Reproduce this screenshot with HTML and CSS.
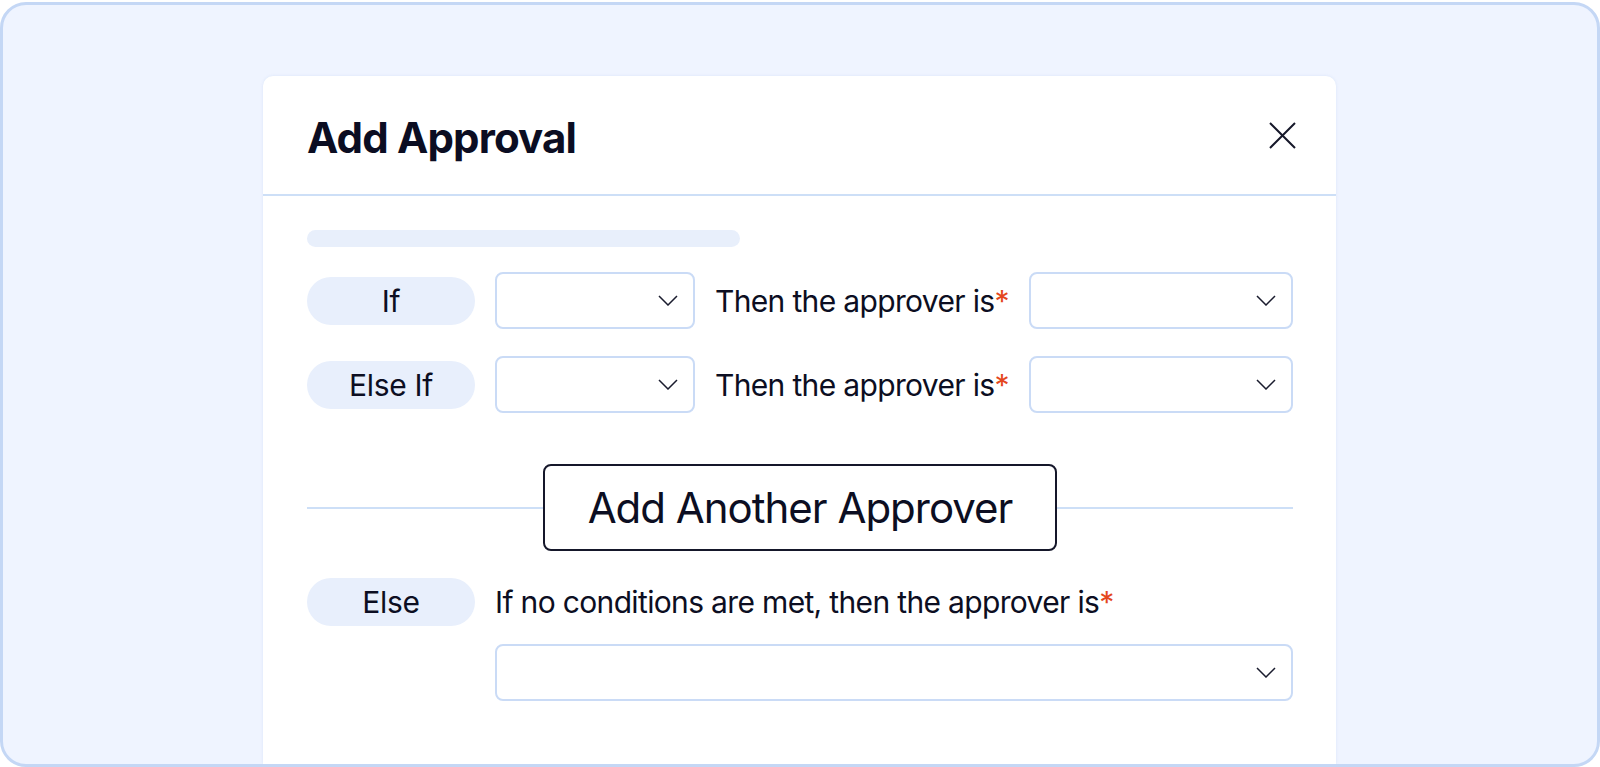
FILE: index.html
```html
<!DOCTYPE html>
<html lang="en">
<head>
<meta charset="utf-8">
<title>Add Approval</title>
<link rel="stylesheet" href="styles.css">
</head>
<body>
<div class="frame">
  <div class="modal">
    <div class="modal-header">
      <h1 class="title">Add Approval</h1>
      <button class="close" aria-label="Close">
        <svg width="27" height="27" viewBox="0 0 27 27"><path d="M1 1 L26 26 M26 1 L1 26" stroke="#16182a" stroke-width="2" fill="none"/></svg>
      </button>
    </div>
    <div class="modal-body">
      <div class="skeleton"></div>
      <div class="rule-row">
        <span class="pill">If</span>
        <div class="select small"><svg class="chev" width="20" height="11" viewBox="0 0 20 11"><polyline points="1,1 10,10 19,1" stroke="#1a1c2e" stroke-width="1.5" fill="none"/></svg></div>
        <span class="label">Then the approver is<span class="req">*</span></span>
        <div class="select grow"><svg class="chev" width="20" height="11" viewBox="0 0 20 11"><polyline points="1,1 10,10 19,1" stroke="#1a1c2e" stroke-width="1.5" fill="none"/></svg></div>
      </div>
      <div class="rule-row">
        <span class="pill">Else If</span>
        <div class="select small"><svg class="chev" width="20" height="11" viewBox="0 0 20 11"><polyline points="1,1 10,10 19,1" stroke="#1a1c2e" stroke-width="1.5" fill="none"/></svg></div>
        <span class="label">Then the approver is<span class="req">*</span></span>
        <div class="select grow"><svg class="chev" width="20" height="11" viewBox="0 0 20 11"><polyline points="1,1 10,10 19,1" stroke="#1a1c2e" stroke-width="1.5" fill="none"/></svg></div>
      </div>
      <div class="divider">
        <span class="divider-line"></span>
        <button class="add-btn">Add Another Approver</button>
        <span class="divider-line"></span>
      </div>
      <div class="else-row">
        <span class="pill">Else</span>
        <div class="else-col">
          <span class="label else-label">If no conditions are met, then the approver is<span class="req">*</span></span>
          <div class="select"><svg class="chev" width="20" height="11" viewBox="0 0 20 11"><polyline points="1,1 10,10 19,1" stroke="#1a1c2e" stroke-width="1.5" fill="none"/></svg></div>
        </div>
      </div>
    </div>
  </div>
</div>
</body>
</html>
```

FILE: styles.css
```css
* { box-sizing: border-box; }

html, body {
  margin: 0;
  padding: 0;
  background: #ffffff;
  font-family: Inter, "Noto Sans", "Liberation Sans", sans-serif;
  color: #0c0e22;
}

.frame {
  margin-top: 2px;
  height: 765px;
  border: 3px solid #c4d7f5;
  border-radius: 26px;
  background: #eff4ff;
  padding: 71px 0 0 260px;
  overflow: hidden;
  display: flex;
  flex-direction: column;
}

.modal {
  width: 1073px;
  flex: 1;
  background: #ffffff;
  border-radius: 10px 10px 0 0;
  box-shadow: 0 0 3px rgba(190, 208, 240, 0.45);
}

.modal-header {
  height: 120px;
  border-bottom: 2px solid #cddff7;
  padding: 0 40px 0 44px;
  display: flex;
  align-items: center;
  justify-content: space-between;
}

.title {
  margin: 5px 0 0 0;
  font-size: 42px;
  font-weight: 700;
  letter-spacing: -0.02em;
  color: #0b0d22;
}

.close {
  border: none;
  background: none;
  padding: 0;
  width: 27px;
  height: 27px;
  display: flex;
}

.modal-body {
  padding: 34px 43px 0 44px;
}

.skeleton {
  width: 433px;
  height: 17px;
  border-radius: 9px;
  background: #e8effb;
  margin-bottom: 25px;
}

.rule-row {
  display: flex;
  align-items: center;
  gap: 20px;
  height: 57px;
}

.rule-row + .rule-row {
  margin-top: 27px;
}

.pill {
  flex: none;
  width: 168px;
  height: 48px;
  border-radius: 24px;
  background: #e8effc;
  display: flex;
  align-items: center;
  justify-content: center;
  font-size: 30px;
  letter-spacing: -0.01em;
  color: #0c0e22;
}

.select {
  height: 57px;
  border: 2px solid #cadbf6;
  border-radius: 8px;
  background: #ffffff;
  display: flex;
  align-items: center;
  justify-content: flex-end;
  padding-right: 15px;
}

.select.small {
  width: 200px;
  flex: none;
}

.select.grow {
  flex: 1;
}

.chev {
  display: block;
}

.label {
  font-size: 30px;
  letter-spacing: -0.022em;
  white-space: nowrap;
  color: #0c0e22;
}

.req {
  color: #e4471d;
  letter-spacing: 0;
}

.divider {
  margin-top: 51px;
  height: 87px;
  display: flex;
  align-items: center;
}

.divider-line {
  flex: 1;
  height: 2px;
  background: #cddff7;
}

.add-btn {
  flex: none;
  width: 514px;
  height: 87px;
  border: 2px solid #15172a;
  border-radius: 8px;
  background: #ffffff;
  font-family: Inter, "Noto Sans", "Liberation Sans", sans-serif;
  font-size: 42px;
  font-weight: 400;
  letter-spacing: -0.024em;
  color: #0c0e22;
  padding: 0;
}

.else-row {
  margin-top: 27px;
  display: flex;
  gap: 20px;
  align-items: flex-start;
}

.else-col {
  flex: 1;
  display: flex;
  flex-direction: column;
}

.else-label {
  height: 48px;
  line-height: 48px;
}

.else-col .select {
  margin-top: 18px;
}
```
